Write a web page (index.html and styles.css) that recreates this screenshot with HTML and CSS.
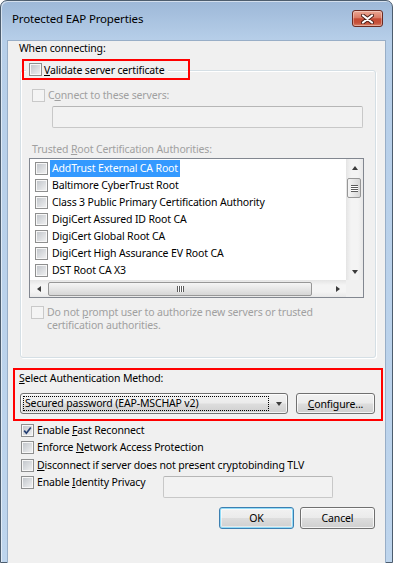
FILE: index.html
```html
<!DOCTYPE html>
<html lang="en">
<head>
  <meta charset="UTF-8">
  <meta name="viewport" content="width=device-width, initial-scale=1.0">
  <title>Protected EAP Properties</title>
  <link rel="stylesheet" href="styles.css">
</head>
<body>
  <div class="window">
    <div class="titlebar">
      <span class="title">Protected EAP Properties</span>
      <div class="close">
        <svg width="13" height="10" viewBox="0 0 13 10">
          <path d="M2 1.5 L11 8.5 M11 1.5 L2 8.5" stroke="#4b1f18" stroke-width="4" stroke-linecap="round"/>
          <path d="M2 1.5 L11 8.5 M11 1.5 L2 8.5" stroke="#fff" stroke-width="2.2" stroke-linecap="round"/>
        </svg>
      </div>
    </div>

    <div class="client">
      <div class="top-label">When connecting:</div>

      <div class="group">
        <div class="legend">
          <span class="check"></span>
          <span><u>V</u>alidate server certificate</span>
        </div>

        <div class="opt servers disabled">
          <span class="check"></span>
          <span>C<u>o</u>nnect to these servers:</span>
        </div>
        <div class="textbox servers-box"></div>

        <div class="trusted disabled">Trusted <u>R</u>oot Certification Authorities:</div>

        <div class="listbox">
          <div class="list-top">
            <div class="rows">
              <div class="item"><span class="check"></span><span class="item-text selected">AddTrust External CA Root</span></div>
              <div class="item"><span class="check"></span><span class="item-text">Baltimore CyberTrust Root</span></div>
              <div class="item"><span class="check"></span><span class="item-text">Class 3 Public Primary Certification Authority</span></div>
              <div class="item"><span class="check"></span><span class="item-text">DigiCert Assured ID Root CA</span></div>
              <div class="item"><span class="check"></span><span class="item-text">DigiCert Global Root CA</span></div>
              <div class="item"><span class="check"></span><span class="item-text">DigiCert High Assurance EV Root CA</span></div>
              <div class="item"><span class="check"></span><span class="item-text">DST Root CA X3</span></div>
            </div>
            <div class="vscroll">
              <div class="sb-btn"><span class="tri up"></span></div>
              <div class="vthumb"><span class="grip-v"></span></div>
              <div class="sb-track"></div>
              <div class="sb-btn"><span class="tri down"></span></div>
            </div>
          </div>
          <div class="hscroll">
            <div class="sb-btn"><span class="tri left"></span></div>
            <div class="hthumb"><span class="grip-h"></span></div>
            <div class="sb-track"></div>
            <div class="sb-btn"><span class="tri right"></span></div>
            <div class="sb-corner"></div>
          </div>
        </div>

        <div class="opt prompt disabled">
          <span class="check"></span>
          <span>Do not <u>p</u>rompt user to authorize new servers or trusted<br>certification authorities.</span>
        </div>
      </div>

      <div class="auth">
        <div class="auth-label"><u>S</u>elect Authentication Method:</div>
        <div class="auth-row">
          <div class="combo">
            <span class="combo-text">Secured password (EAP-MSCHAP v2)</span>
            <span class="tri down combo-arrow"></span>
          </div>
          <button class="btn configure"><u>C</u>onfigure...</button>
        </div>
      </div>

      <div class="options">
        <div class="opt row-a">
          <span class="check checked">
            <svg width="9" height="9" viewBox="0 0 9 9"><path d="M1.2 4.6 L3.4 7.2 L7.8 1.4" fill="none" stroke="#253f73" stroke-width="1.7"/></svg>
          </span>
          <span>Enable <u>F</u>ast Reconnect</span>
        </div>
        <div class="opt row-b">
          <span class="check"></span>
          <span>Enforce <u>N</u>etwork Access Protection</span>
        </div>
        <div class="opt row-a">
          <span class="check"></span>
          <span><u>D</u>isconnect if server does not present cryptobinding TLV</span>
        </div>
        <div class="identity">
          <div class="opt row-b identity-opt">
            <span class="check"></span>
            <span>Enable <u>I</u>dentity Privacy</span>
          </div>
          <div class="textbox identity-box"></div>
        </div>
      </div>

      <div class="buttons">
        <button class="btn default">OK</button>
        <button class="btn">Cancel</button>
      </div>
    </div>
  </div>
</body>
</html>
```

FILE: styles.css
```css
/* Basic Reset */
* { box-sizing: border-box; margin: 0; padding: 0; }

body {
  width: 393px;
  height: 563px;
  overflow: hidden;
  font-family: "Noto Sans", "Open Sans", sans-serif;
  font-size: 10.5px;
  letter-spacing: -0.15px;
  color: #000;
  background: #fff;
}

u { text-underline-offset: 1px; }

/* Window frame */
.window {
  width: 393px;
  height: 563px;
  border: 1px solid #4d5d6e;
  border-radius: 7px 7px 0 0;
  padding: 0 7px 7px;
  background: linear-gradient(#9db8d8, #b7cfe9 40px, #bed5ed);
  box-shadow: inset 1px 1px 0 rgba(255, 255, 255, 0.55);
}

.titlebar {
  height: 29px;
  display: flex;
  justify-content: space-between;
  align-items: flex-start;
  padding-left: 4px;
}

.title {
  margin-top: 10px;
  font-size: 11.5px;
  line-height: 15px;
}

.close {
  width: 31px;
  height: 17px;
  margin-top: 9px;
  margin-right: 2px;
  display: flex;
  justify-content: center;
  align-items: center;
  border: 1px solid #6b2a21;
  border-radius: 3px;
  background: linear-gradient(#eba894 0%, #da7b65 45%, #c54a33 52%, #c6513a 80%, #d9866d 100%);
  box-shadow: inset 0 0 0 1px rgba(255, 255, 255, 0.35);
}

/* Dialog body */
.client {
  height: 525px;
  background: #f0f0f0;
  box-shadow: 0 0 0 1px #98aec7;
}

.top-label {
  margin: 11px 0 0 11px;
  line-height: 15px;
}

.disabled { color: #a0a0a0; }

/* Checkboxes */
.check {
  flex: none;
  width: 13px;
  height: 13px;
  padding: 1px;
  border: 1px solid #8e8f8f;
  background: linear-gradient(135deg, #c3c7cc, #eeeff0) content-box, #f7f7f7;
  display: flex;
  justify-content: center;
  align-items: center;
}
.disabled .check {
  border-color: #c9c9c9;
  background: #f4f4f4;
}

.opt {
  display: flex;
  align-items: center;
  gap: 3px;
  line-height: 15px;
}

/* Group box */
.group {
  width: 356px;
  height: 288px;
  margin: 14px 0 0 12px;
  border: 1px solid #d5dfe5;
  border-radius: 3px;
  box-shadow: inset 1px 1px 0 #fff, 1px 1px 0 #fff;
}

.legend {
  position: relative;
  display: flex;
  align-items: center;
  gap: 2px;
  width: max-content;
  height: 15px;
  margin: -9px 0 0 5px;
  padding: 0 3px;
  background: #f0f0f0;
}
.legend::after {
  content: "";
  position: absolute;
  left: -4px;
  top: -3px;
  bottom: -3px;
  right: -22px;
  border: 2px solid #f00;
}

.servers { margin: 11px 0 0 11px; height: 15px; }

.textbox {
  height: 22px;
  border: 1px solid #c8c8c8;
  border-top-color: #b6b6b6;
  border-radius: 2px;
  background: #f2f2f2;
}
.servers-box { width: 311px; margin: 3px 0 0 31px; }

.trusted {
  margin: 14px 0 0 11px;
  line-height: 15px;
}

/* Certificate list */
.listbox {
  width: 335px;
  height: 140px;
  margin: 1px 0 0 8px;
  border: 1px solid #828790;
  background: #fff;
}

.list-top {
  display: flex;
  height: 121px;
}

.rows {
  flex: 1;
  padding-top: 1px;
}

.item {
  display: flex;
  align-items: center;
  height: 17px;
  padding-left: 5px;
}

.item-text {
  margin-left: 2px;
  padding: 0 2px;
  line-height: 17px;
}
.item-text.selected {
  background: #3399ff;
  color: #fff;
}

.vscroll {
  width: 17px;
  display: flex;
  flex-direction: column;
  background: linear-gradient(90deg, #e4e4e4, #f4f4f4 30%, #f4f4f4 70%, #e8e8e8);
}

.hscroll {
  display: flex;
  height: 17px;
  background: linear-gradient(#e4e4e4, #f4f4f4 30%, #f4f4f4 70%, #e8e8e8);
}

.sb-btn {
  flex: none;
  width: 17px;
  height: 17px;
  display: flex;
  justify-content: center;
  align-items: center;
}

.sb-track { flex: 1; }

.sb-corner {
  width: 17px;
  background: #f0f0f0;
}

.vthumb {
  height: 20px;
  margin: 2px 2px 0 1px;
  border: 1px solid #979797;
  border-radius: 2px;
  background: linear-gradient(90deg, #f5f5f5, #e6e6e6 50%, #d6d6d6);
  display: flex;
  justify-content: center;
  align-items: center;
}

.hthumb {
  width: 264px;
  height: 14px;
  margin: 2px 0 0 1px;
  border: 1px solid #979797;
  border-radius: 2px;
  background: linear-gradient(#f5f5f5, #e6e6e6 50%, #d6d6d6);
  display: flex;
  justify-content: center;
  align-items: center;
}

.grip-v {
  width: 7px;
  height: 7px;
  background: repeating-linear-gradient(#5c5c5c 0 1px, #fff 1px 2px);
}
.grip-h {
  width: 7px;
  height: 6px;
  background: repeating-linear-gradient(90deg, #5c5c5c 0 1px, #fff 1px 2px);
}

/* Little arrow triangles */
.tri { width: 0; height: 0; }
.tri.up {
  border-left: 3.5px solid transparent;
  border-right: 3.5px solid transparent;
  border-bottom: 4px solid #3c3c3c;
}
.tri.down {
  border-left: 3.5px solid transparent;
  border-right: 3.5px solid transparent;
  border-top: 4px solid #3c3c3c;
}
.tri.left {
  border-top: 3.5px solid transparent;
  border-bottom: 3.5px solid transparent;
  border-right: 4px solid #3c3c3c;
}
.tri.right {
  border-top: 3.5px solid transparent;
  border-bottom: 3.5px solid transparent;
  border-left: 4px solid #3c3c3c;
}

.prompt {
  align-items: flex-start;
  margin: 8px 0 0 10px;
  line-height: 13px;
}

/* Authentication method */
.auth {
  width: 370px;
  height: 53px;
  margin: 10px 0 0 5px;
  padding: 1px 4px 5px;
  border: 2px solid #f00;
}

.auth-label { line-height: 15px; }

.auth-row {
  display: flex;
  gap: 8px;
  margin: 7px 0 0 1px;
}

.btn,
.combo {
  height: 21px;
  border: 1px solid #707070;
  border-radius: 3px;
  background: linear-gradient(#f2f2f2 0%, #ebebeb 48%, #dddddd 52%, #cfcfcf 100%);
  box-shadow: inset 0 0 0 1px rgba(255, 255, 255, 0.75);
  font: inherit;
  letter-spacing: inherit;
  color: #000;
}

.combo {
  width: 268px;
  display: flex;
  align-items: center;
  padding-left: 2px;
}

.combo-text {
  flex: 1;
  height: 15px;
  line-height: 13px;
  padding-left: 1px;
  border: 1px dotted #000;
}

.combo-arrow { margin: 0 5px 0 7px; border-top-color: #000; }

.configure { width: 79px; }

/* Extra options */
.options { margin-left: 13px; }

.row-a { height: 18px; }
.row-b { height: 17px; }

.identity {
  display: flex;
  align-items: flex-start;
}
.identity-opt { width: 142px; }
.identity-box { width: 170px; margin-top: 2px; }

/* Bottom buttons */
.buttons {
  display: flex;
  justify-content: flex-end;
  gap: 6px;
  margin-top: 9px;
  padding-right: 10px;
}

.buttons .btn {
  width: 75px;
  height: 22px;
}

.btn.default {
  border-color: #3c7fb1;
  box-shadow: inset 0 0 0 1px #93dcf8, inset 0 0 0 2px rgba(255, 255, 255, 0.5);
}
```
